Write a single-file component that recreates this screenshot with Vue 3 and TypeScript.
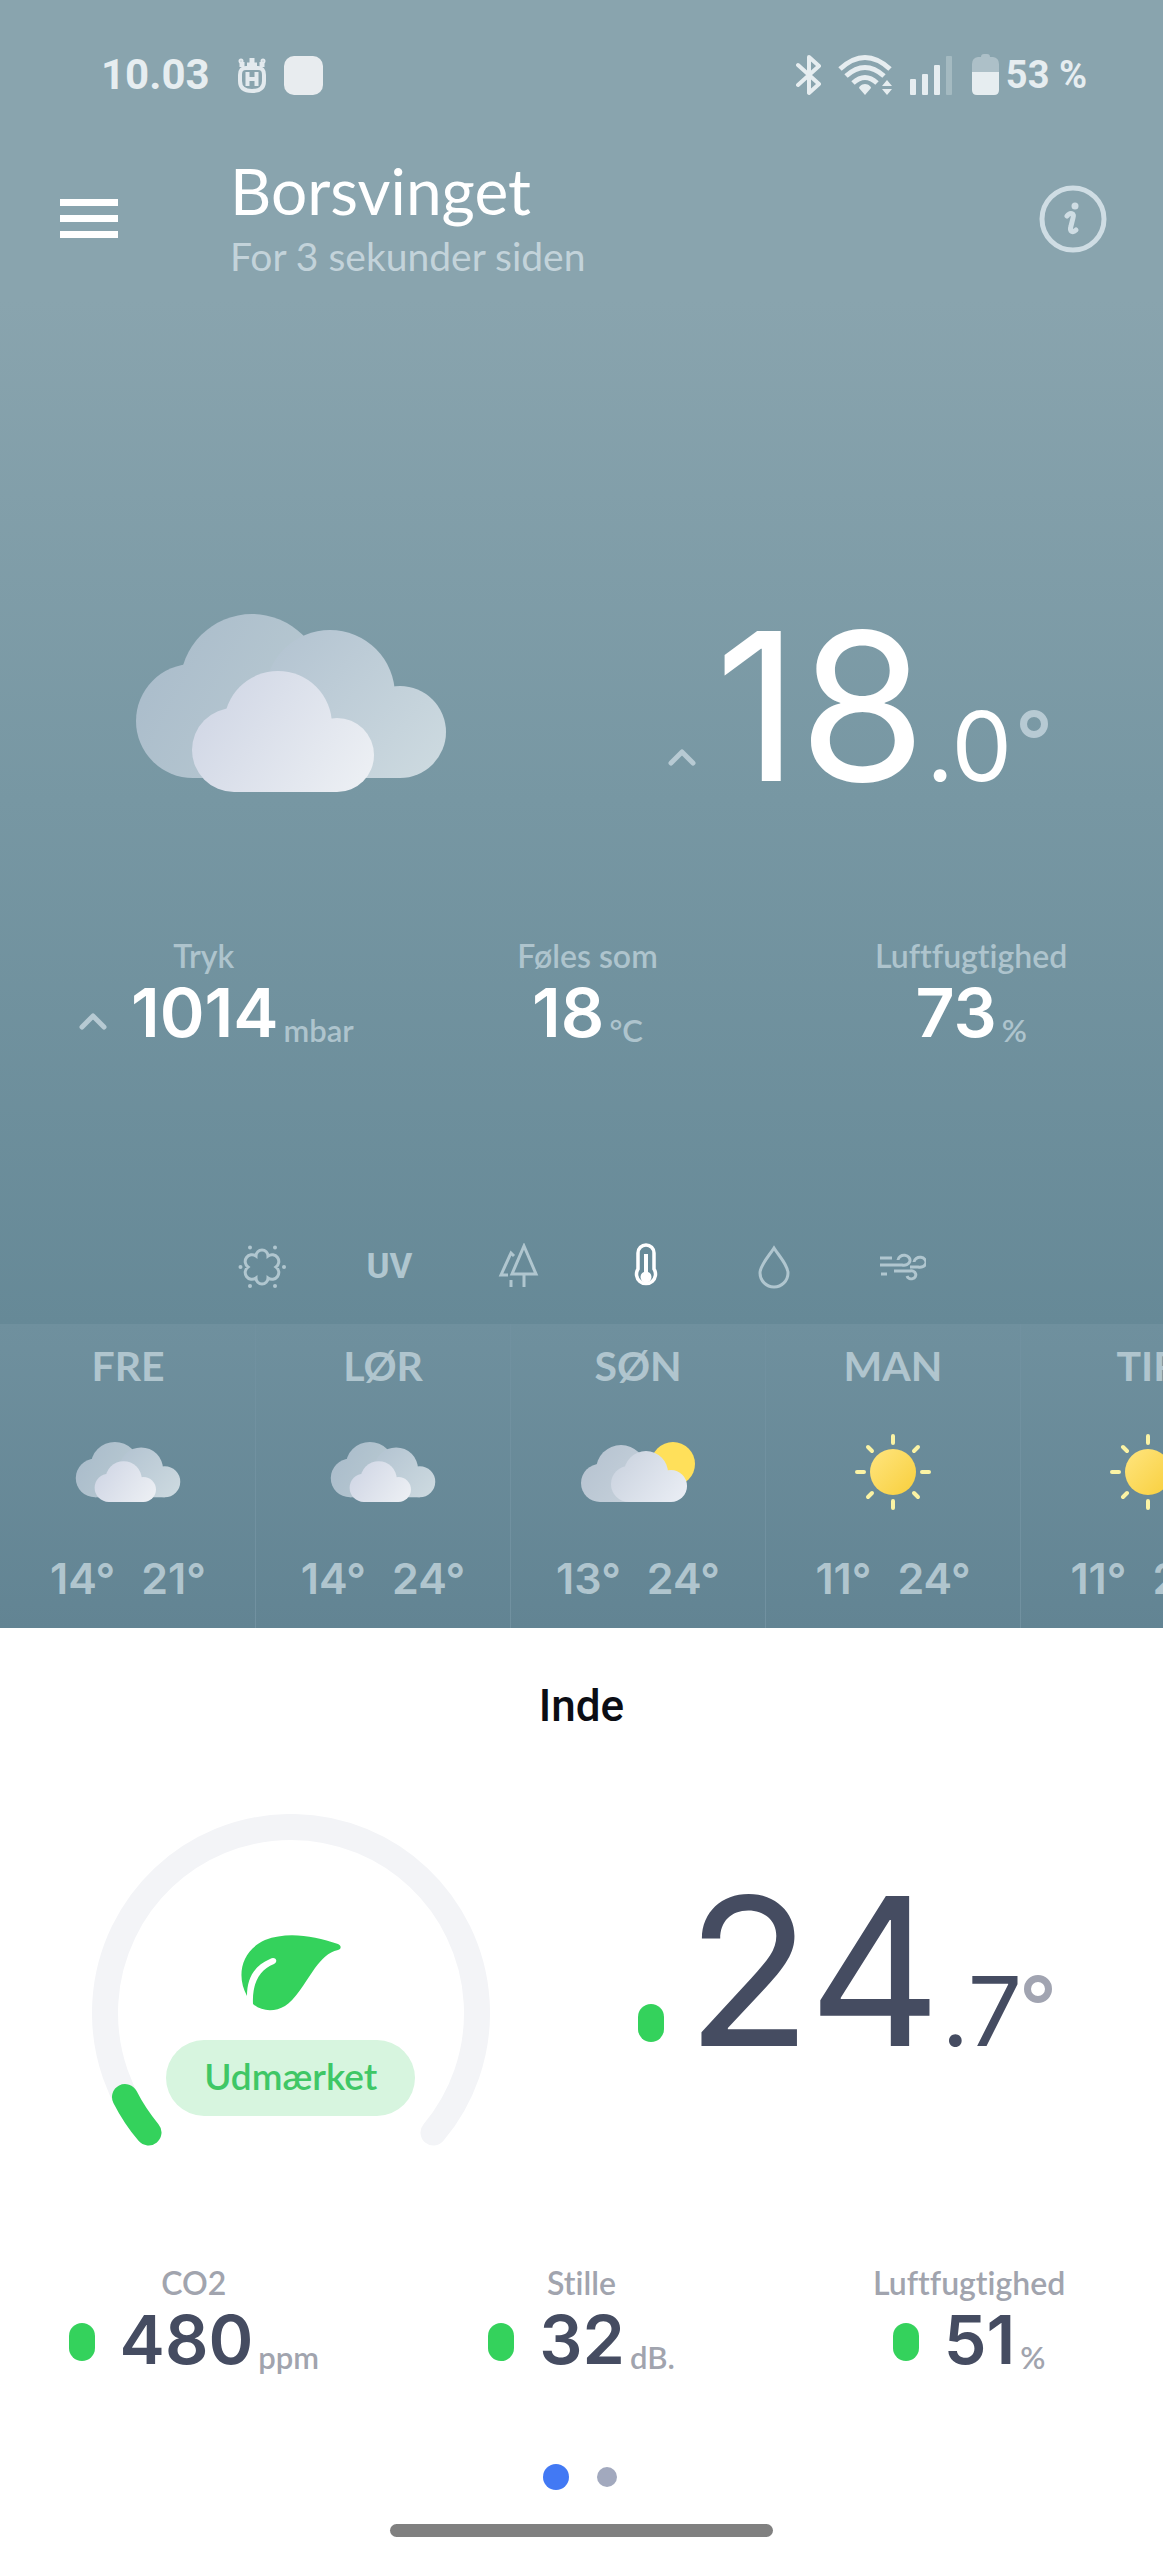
<script setup lang="ts">
import { ref } from 'vue'

interface Metric {
  label: string
  value: string
  unit: string
  trend?: boolean
}

interface Day {
  name: string
  icon: 'clouds' | 'partly' | 'sun'
  low: number
  high: number
}

const outdoor: Metric[] = [
  { label: 'Tryk', value: '1014', unit: 'mbar', trend: true },
  { label: 'Føles som', value: '18', unit: '°C' },
  { label: 'Luftfugtighed', value: '73', unit: '%' },
]

const indoor: Metric[] = [
  { label: 'CO2', value: '480', unit: 'ppm' },
  { label: 'Stille', value: '32', unit: 'dB.' },
  { label: 'Luftfugtighed', value: '51', unit: '%' },
]

const days: Day[] = [
  { name: 'FRE', icon: 'clouds', low: 14, high: 21 },
  { name: 'LØR', icon: 'clouds', low: 14, high: 24 },
  { name: 'SØN', icon: 'partly', low: 13, high: 24 },
  { name: 'MAN', icon: 'sun', low: 11, high: 24 },
  { name: 'TIR', icon: 'sun', low: 11, high: 24 },
]

const layers = ['pollen', 'uv', 'trees', 'temperature', 'rain', 'wind'] as const
type Layer = (typeof layers)[number]
const activeLayer = ref<Layer>('temperature')
const layerNames: Record<Layer, string> = {
  pollen: 'Pollen',
  uv: 'UV-indeks',
  trees: 'Luftkvalitet',
  temperature: 'Temperatur',
  rain: 'Nedbør',
  wind: 'Vind',
}
</script>

<template>
  <main class="app">
    <svg class="defs" width="0" height="0" aria-hidden="true">
      <defs>
        <linearGradient id="cloud-back" gradientUnits="userSpaceOnUse" x1="0" y1="40" x2="220" y2="160">
          <stop offset="0" stop-color="#aabccb" />
          <stop offset="1" stop-color="#bccdd3" />
        </linearGradient>
        <linearGradient id="cloud-mid" gradientUnits="userSpaceOnUse" x1="150" y1="30" x2="300" y2="164">
          <stop offset="0" stop-color="#b5c5d2" />
          <stop offset="1" stop-color="#cddae0" />
        </linearGradient>
        <linearGradient id="cloud-front" gradientUnits="userSpaceOnUse" x1="80" y1="80" x2="230" y2="178">
          <stop offset="0" stop-color="#d2d8e6" />
          <stop offset="1" stop-color="#edf0f4" />
        </linearGradient>
        <linearGradient id="small-back" gradientUnits="userSpaceOnUse" x1="0" y1="10" x2="70" y2="60">
          <stop offset="0" stop-color="#b5c2d0" />
          <stop offset="1" stop-color="#c8d3dc" />
        </linearGradient>
        <linearGradient id="small-front" gradientUnits="userSpaceOnUse" x1="40" y1="15" x2="100" y2="60">
          <stop offset="0" stop-color="#ccd4e0" />
          <stop offset="1" stop-color="#e9edf4" />
        </linearGradient>
        <linearGradient id="sun-fill" x1="0" y1="0" x2="1" y2="1">
          <stop offset="0" stop-color="#ffe57f" />
          <stop offset="1" stop-color="#f8cf3c" />
        </linearGradient>
      </defs>
      <symbol id="clouds" viewBox="0 0 310 178">
        <g fill="url(#cloud-back)">
          <circle cx="57" cy="107" r="57" />
          <circle cx="116" cy="72" r="72" />
          <rect x="57" y="90" width="140" height="74" />
        </g>
        <g fill="url(#cloud-mid)">
          <circle cx="194" cy="81" r="65" />
          <circle cx="264" cy="118" r="46" />
          <rect x="160" y="110" width="104" height="54" />
        </g>
        <g fill="url(#cloud-front)">
          <circle cx="98" cy="136" r="42" />
          <circle cx="142" cy="111" r="54" />
          <circle cx="201" cy="141" r="37" />
          <rect x="98" y="120" width="103" height="58" />
        </g>
      </symbol>
      <symbol id="partly" viewBox="0 0 116 60">
        <circle cx="93" cy="22" r="22" fill="#ffe05a" />
        <g fill="url(#small-back)">
          <circle cx="20" cy="41" r="19" />
          <circle cx="41" cy="28" r="25" />
          <rect x="20" y="30" width="50" height="30" />
        </g>
        <g fill="url(#small-front)">
          <circle cx="49" cy="42" r="18" />
          <circle cx="66" cy="31" r="22" />
          <circle cx="91" cy="44" r="16" />
          <rect x="49" y="36" width="42" height="24" />
        </g>
      </symbol>
      <symbol id="sun" viewBox="0 0 80 80">
        <circle cx="40" cy="40" r="23" fill="url(#sun-fill)" />
        <path
          d="M40 4V11M40 69V76M4 40H11M69 40H76M15 15L19 19M61 61L65 65M15 65L19 61M61 19L65 15"
          stroke="#fbf3a4"
          stroke-width="4"
          stroke-linecap="round"
          fill="none"
        />
      </symbol>
    </svg>

    <section class="outdoor">
      <div class="status">
        <div class="status-side">
          <span class="clock">10.03</span>
          <svg class="crown" width="28" height="36" viewBox="0 0 28 36" fill="none" stroke="#e3eaee">
            <path d="M8 11H20C25 11 26 14 26 18V24C26 31 22 34 14 34S2 31 2 24V18C2 14 3 11 8 11Z" stroke-width="4" />
            <path d="M4 10L4 5M9 8H19M14 9V1M24 10L24 5" stroke-width="5" />
            <circle cx="3" cy="4" r="1" stroke-width="3" />
            <circle cx="25" cy="4" r="1" stroke-width="3" />
            <path d="M9.500 15V29M18.500 15V29M9.500 22H18.500" stroke-width="4" />
          </svg>
          <span class="tile"></span>
        </div>
        <div class="status-side">
          <svg width="26" height="42" viewBox="0 0 26 42" fill="none" stroke="#e6edf0" stroke-width="4" stroke-linejoin="round" stroke-linecap="round">
            <path d="M2 11L23 30L13 39V3L23 12L2 31" />
          </svg>
          <svg class="wifi" width="54" height="42" viewBox="0 0 54 42" fill="none" stroke="#e6edf0" stroke-width="5">
            <path d="M2 15Q27 -8 52 15M8 22Q27 5 46 22M15 29Q27 18 39 29" />
            <path d="M27 30C31 30 33 33 33 34L27 41L21 34C21 33 23 30 27 30Z" fill="#e6edf0" stroke="none" />
            <path d="M44 32L49 26L54 32ZM44 35H54L49 41Z" fill="#e6edf0" stroke="none" />
          </svg>
          <svg class="signal" width="42" height="42" viewBox="0 0 42 42" fill="#e6edf0">
            <rect x="0" y="25" width="6" height="16" rx="1" />
            <rect x="12" y="20" width="6" height="21" rx="1" />
            <rect x="24" y="11" width="6" height="30" rx="1" />
            <rect x="36" y="2" width="6" height="39" rx="1" opacity="0.3" />
          </svg>
          <svg class="battery" width="27" height="42" viewBox="0 0 27 42">
            <path d="M9 3Q9 0 12 0H15Q18 0 18 3H21Q27 4 27 10V18H0V10Q0 4 6 3Z" fill="#adc0c8" />
            <path d="M0 18H27V36Q27 41 22 41H5Q0 41 0 36Z" fill="#e6edf0" />
          </svg>
          <span class="charge">53 %</span>
        </div>
      </div>

      <header class="header">
        <button class="icon-button" type="button" aria-label="Menu">
          <svg width="58" height="40" viewBox="0 0 58 40" fill="#fff">
            <path d="M0 0H58V7H0ZM0 16H58V23H0ZM0 32H58V39H0Z" />
          </svg>
        </button>
        <div class="place">
          <h1>Borsvinget</h1>
          <p>For 3 sekunder siden</p>
        </div>
        <button class="icon-button" type="button" aria-label="Information">
          <svg width="68" height="68" viewBox="0 0 68 68" fill="none" stroke="#cfdde4" stroke-linecap="round">
            <circle cx="34" cy="34" r="31" stroke-width="5" />
            <circle cx="36" cy="21" r="3.500" fill="#cfdde4" stroke="none" />
            <path d="M28 31C31 27 36 28 34 33L32 41C30 47 34 48 37 45" stroke-width="5" />
          </svg>
        </button>
      </header>

      <div class="hero">
        <div class="hero-icon">
          <svg width="310" height="178"><use href="#clouds" /></svg>
        </div>
        <div class="temperature">
          <svg class="trend" width="28" height="18" viewBox="0 0 28 18"><path d="M3 15L14 4L25 15" /></svg>
          <span class="whole">18</span>
          <span class="decimal">.0</span>
          <span class="degree"></span>
        </div>
      </div>

      <dl class="metrics metrics-out">
        <div v-for="m in outdoor" :key="m.label" class="metric">
          <dt>{{ m.label }}</dt>
          <dd>
            <svg v-if="m.trend" class="trend" width="28" height="18" viewBox="0 0 28 18"><path d="M3 15L14 4L25 15" /></svg>
            <span class="value">{{ m.value }}</span>
            <span class="unit">{{ m.unit }}</span>
          </dd>
        </div>
      </dl>

      <div class="layers">
        <button
          v-for="layer in layers"
          :key="layer"
          type="button"
          class="layer"
          :class="{ active: layer === activeLayer }"
          :aria-label="layerNames[layer]"
          @click="activeLayer = layer"
        >
          <svg v-if="layer === 'pollen'" width="48" height="48" viewBox="0 0 48 48">
            <path d="M18 13A6 6 0 0 1 30 13A6.500 6.500 0 0 1 38 24A6.500 6.500 0 0 1 30 35A6 6 0 0 1 18 35A6.500 6.500 0 0 1 10 24A6.500 6.500 0 0 1 18 13Z" />
            <g class="solid">
              <circle cx="12" cy="4.500" r="2" /><circle cx="37" cy="4.500" r="2" /><circle cx="2.500" cy="24" r="2" />
              <circle cx="46" cy="24" r="2" /><circle cx="12" cy="43" r="2" /><circle cx="37" cy="43" r="2" />
            </g>
          </svg>
          <span v-else-if="layer === 'uv'">UV</span>
          <svg v-else-if="layer === 'trees'" width="48" height="48" viewBox="0 0 48 48">
            <path d="M30 3L42 31H18Z M30 31V44M20 13L17 10L7 32H14M17 37V44" />
          </svg>
          <svg v-else-if="layer === 'temperature'" width="48" height="48" viewBox="0 0 48 48">
            <path d="M16 10A8 8 0 0 1 32 10V26A9.500 9.500 0 1 1 16 26Z" stroke-width="3.500" />
            <path d="M24 11V32" stroke-width="4" />
            <circle class="solid" cx="24" cy="34" r="5.500" />
          </svg>
          <svg v-else-if="layer === 'rain'" width="48" height="48" viewBox="0 0 48 48">
            <path d="M24 5C29 13 38 22 38 30A14 14 0 0 1 10 30C10 22 19 13 24 5Z" />
          </svg>
          <svg v-else width="48" height="48" viewBox="0 0 48 48">
            <path d="M2 15H14M2 22H24A6 5 0 1 0 20 17M32 24H40A6 5 0 1 0 36 19M16 28H32A4.500 4 0 1 1 29 33M3 31H9" />
          </svg>
        </button>
      </div>

      <ul class="forecast">
        <li v-for="day in days" :key="day.name" class="day">
          <span class="day-name">{{ day.name }}</span>
          <span class="day-icon">
            <svg v-if="day.icon === 'clouds'" width="106" height="60"><use href="#clouds" /></svg>
            <svg v-else-if="day.icon === 'partly'" width="116" height="60"><use href="#partly" /></svg>
            <svg v-else width="80" height="80"><use href="#sun" /></svg>
          </span>
          <span class="range"><span>{{ day.low }}°</span><span>{{ day.high }}°</span></span>
        </li>
      </ul>
    </section>

    <section class="indoor">
      <h2>Inde</h2>
      <div class="hero hero-in">
        <div class="gauge">
          <svg width="398" height="332" viewBox="0 0 398 332" fill="none" stroke-width="26" stroke-linecap="round">
            <path d="M56.500 318.500A186 186 0 1 1 341.500 318.500" stroke="#f3f4f7" />
            <path d="M33 283A186 186 0 0 0 56.500 318.500" stroke="#34d25c" />
          </svg>
          <div class="quality">
            <svg width="100" height="76" viewBox="0 0 100 76">
              <path
                d="M6 61C-5 41 0 16 24 5C47 -4 73 1 97 9C101 11 100 14 97 15C87 17 81 24 74 33C63 49 54 65 44 71C34 77 21 77 12 69C11 49 18 35 33 29C38 26 34 21 29 24C13 31 6 43 6 61Z"
                fill="#34d25c"
              />
            </svg>
            <span class="pill">Udmærket</span>
          </div>
        </div>
        <div class="temperature">
          <i class="level"></i>
          <span class="whole">24</span>
          <span class="decimal">.7</span>
          <span class="degree"></span>
        </div>
      </div>

      <dl class="metrics metrics-in">
        <div v-for="m in indoor" :key="m.label" class="metric">
          <dt>{{ m.label }}</dt>
          <dd>
            <i class="level"></i>
            <span class="value">{{ m.value }}</span>
            <span class="unit">{{ m.unit }}</span>
          </dd>
        </div>
      </dl>

      <div class="pager">
        <button type="button" class="page current" aria-label="Side 1"></button>
        <button type="button" class="page" aria-label="Side 2"></button>
      </div>
      <div class="home-bar"></div>
    </section>
  </main>
</template>

<style>
body {
  margin: 0;
  background: #fff;
}
</style>

<style scoped>
.app {
  font-family: Lato, "Open Sans", sans-serif;
  font-variant-ligatures: none;
  overflow: hidden;
}
.app svg {
  display: block;
  flex: none;
}
.app .defs {
  position: absolute;
}
button {
  padding: 0;
  border: 0;
  background: none;
  cursor: pointer;
}
h1,
h2,
p,
dl,
dd,
ul {
  margin: 0;
  padding: 0;
}

.outdoor {
  color: #fff;
  background: linear-gradient(#89a4ae 0, #89a4ae 300px, #7797a3 800px, #668997 1324px);
}

.status {
  display: flex;
  justify-content: space-between;
  padding: 54px 76px 0 101px;
  font: 700 42px/42px Roboto, sans-serif;
  color: #e6edf0;
}
.status-side {
  display: flex;
  align-items: center;
}
.crown {
  margin-left: 28px;
}
.tile {
  width: 39px;
  height: 39px;
  margin-left: 18px;
  border-radius: 10px;
  background: #e8ecef;
}
.wifi {
  margin-left: 16px;
}
.signal {
  margin-left: 18px;
}
.battery {
  margin-left: 20px;
}
.charge {
  margin-left: 7px;
  font-size: 38px;
  font-weight: 700;
}

.header {
  display: flex;
  align-items: center;
  padding: 64px 56px 0 60px;
}
.place {
  flex: 1;
  margin-left: 112px;
}
.place h1 {
  font-size: 64px;
  line-height: 62px;
  font-weight: 400;
}
.place p {
  margin-top: 12px;
  font-size: 39px;
  line-height: 44px;
  font-weight: 400;
  color: #c3d3da;
}

.hero {
  display: grid;
  grid-template-columns: 1fr 1fr;
  align-items: end;
  margin-top: 336px;
}
.hero-icon {
  display: flex;
  justify-content: center;
}
.temperature {
  display: flex;
  align-items: flex-end;
  justify-content: flex-end;
  padding: 0 115px 11px 0;
  font-family: Inter, sans-serif;
}
.trend {
  fill: none;
  stroke: #b7cad3;
  stroke-width: 5;
  stroke-linecap: round;
  stroke-linejoin: round;
  margin-bottom: 15px;
}
.whole {
  margin-left: 19px;
  font-size: 206px;
  line-height: 150px;
}
.decimal {
  font-size: 96px;
  line-height: 70px;
}
.degree {
  box-sizing: border-box;
  width: 28px;
  height: 28px;
  margin: 0 0 43px 8px;
  border: 7px solid #b7cad3;
  border-radius: 50%;
}

.metrics {
  display: grid;
  grid-template-columns: repeat(3, 1fr);
}
.metrics-out {
  margin-top: 146px;
  padding-left: 12px;
}
.metric dt {
  font-size: 32px;
  line-height: 36px;
  font-weight: 600;
  text-align: center;
  color: #aec4cd;
}
.metric dd {
  display: flex;
  align-items: flex-end;
  justify-content: center;
  margin-top: 13px;
}
.metric .trend {
  margin: 0 24px 7px 25px;
}
.metric .value {
  font: 600 68px/50px Inter, sans-serif;
}
.metric .unit {
  margin: 0 0 -5px 5px;
  font-size: 31px;
  line-height: 24px;
  font-weight: 600;
  color: #aec4cd;
}

.layers {
  display: flex;
  justify-content: center;
  gap: 80px;
  margin-top: 206px;
}
.layer {
  width: 48px;
  height: 48px;
  color: #b0c6cf;
  font: 700 35px/48px Roboto, sans-serif;
}
.layer svg {
  fill: none;
  stroke: currentColor;
  stroke-width: 3;
}
.layer .solid {
  fill: currentColor;
  stroke: none;
}
.layer.active {
  color: #fff;
}

.forecast {
  display: flex;
  margin-top: 33px;
  padding-left: 1px;
  list-style: none;
  overflow: hidden;
  background: linear-gradient(#6f909e, #628493);
}
.day {
  box-sizing: border-box;
  flex: 0 0 255px;
  display: flex;
  flex-direction: column;
  align-items: center;
  padding: 18px 0 34px;
  border-right: 1px solid #7191a0;
  color: #b0c5ce;
}
.day-name {
  font-size: 41px;
  line-height: 48px;
  font-weight: 700;
}
.day-icon {
  display: flex;
  align-items: center;
  height: 80px;
  margin: 42px 0 50px;
}
.range {
  display: flex;
  gap: 26px;
  font: 600 43px/32px Inter, sans-serif;
}

.indoor {
  padding-top: 52px;
  color: #454c61;
  background: #fff;
}
.indoor h2 {
  font: 500 44px/52px Roboto, sans-serif;
  text-align: center;
  color: #0b0d14;
}
.hero-in {
  margin-top: 82px;
}
.hero-in .temperature {
  padding: 0 111px 100px 0;
}
.gauge {
  display: grid;
  justify-items: center;
}
.gauge > * {
  grid-area: 1 / 1;
}
.quality {
  display: flex;
  flex-direction: column;
  align-items: center;
  gap: 29px;
  padding-top: 121px;
}
.pill {
  padding: 0 38px 4px;
  border-radius: 38px;
  background: #d7f5df;
  color: #3fc766;
  font-size: 37px;
  line-height: 72px;
  font-weight: 600;
}
.level {
  flex: none;
  width: 26px;
  height: 38px;
  margin-bottom: 4px;
  border-radius: 13px;
  background: #34d25c;
}
.hero-in .whole {
  margin-left: 22px;
}
.indoor .degree {
  margin-left: 2px;
  border-color: #a1a4b1;
}
.metrics-in {
  margin-top: 119px;
}
.metric .level {
  margin: 0 25px 3px 0;
}
.indoor dt,
.indoor .unit {
  color: #a1a4ae;
}
.pager {
  display: flex;
  align-items: center;
  justify-content: center;
  gap: 25px;
  margin-top: 100px;
}
.page {
  width: 20px;
  height: 20px;
  margin: 0 3px;
  border-radius: 50%;
  background: #a2a9be;
}
.page.current {
  width: 26px;
  height: 26px;
  margin: 0;
  background: #4279f4;
}
.home-bar {
  width: 33%;
  height: 13px;
  margin: 34px auto 23px;
  border-radius: 7px;
  background: #808080;
}
</style>
